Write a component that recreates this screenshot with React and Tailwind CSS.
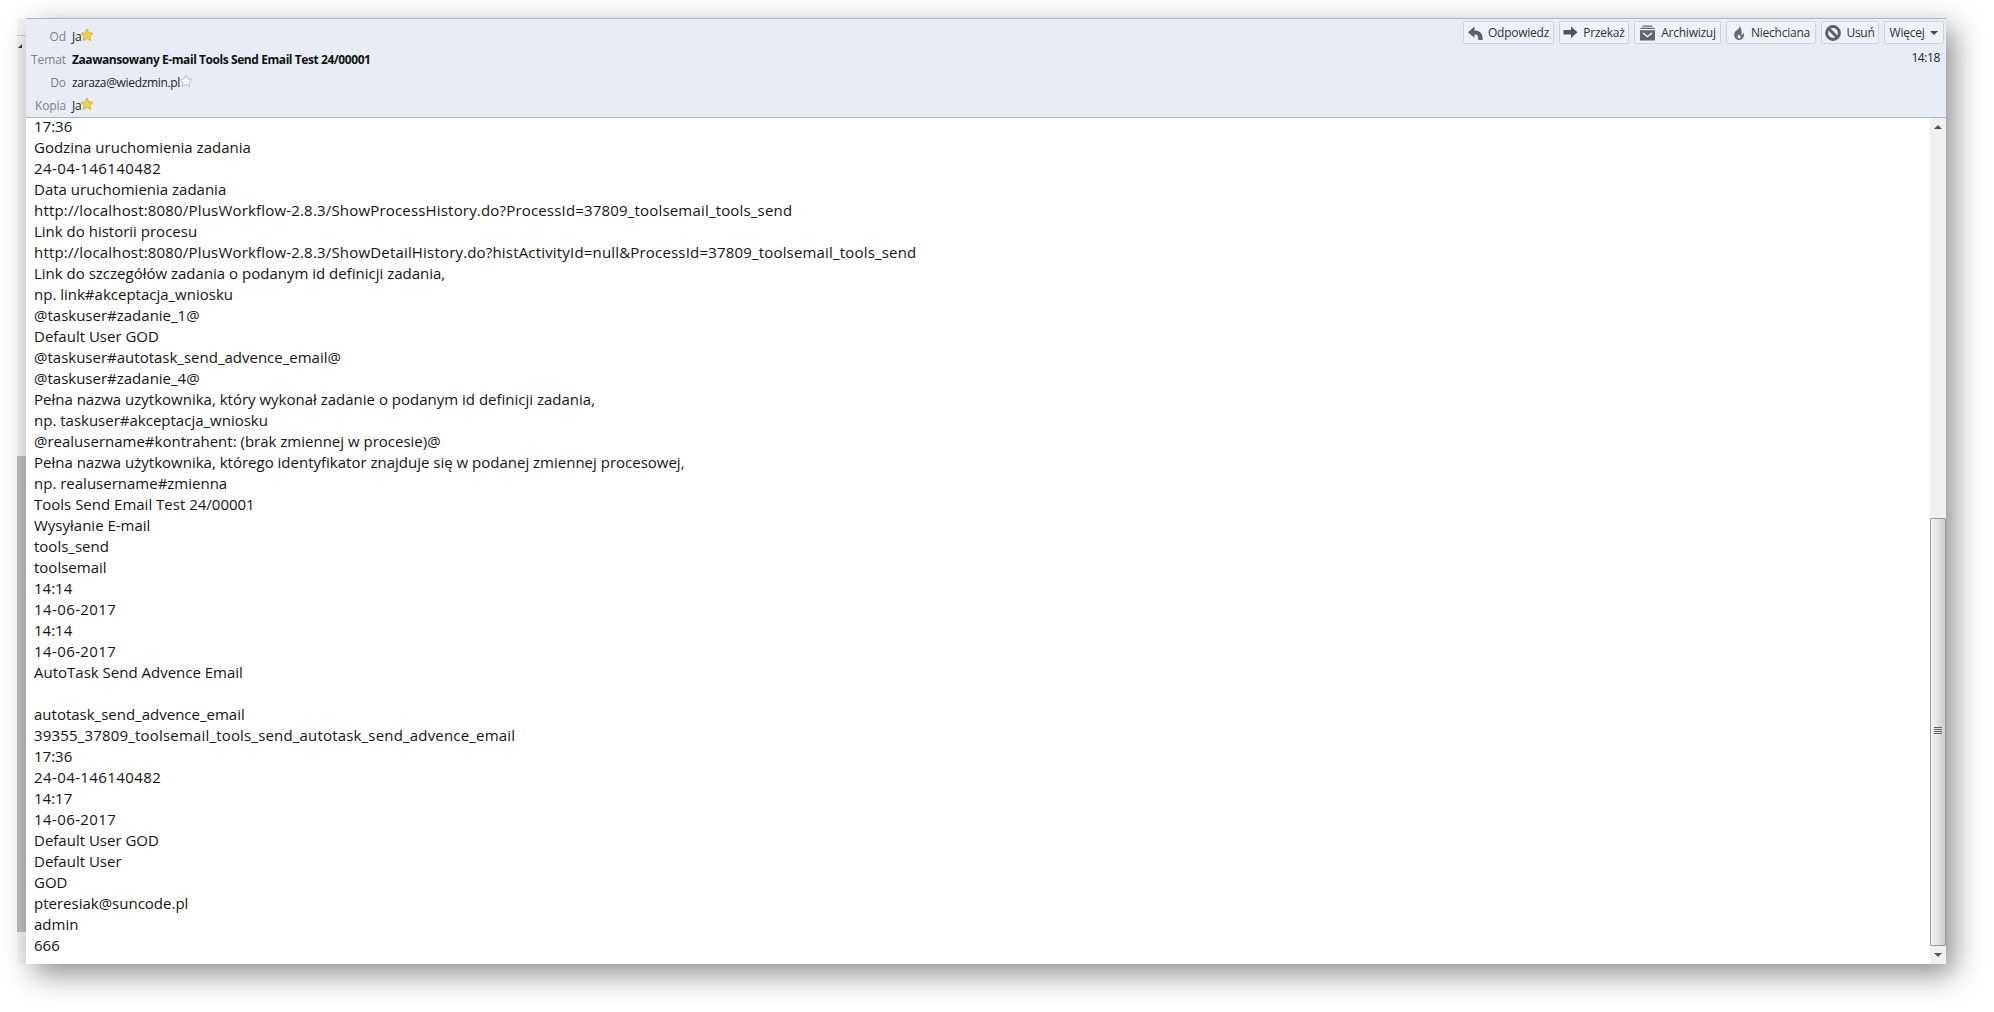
const lines = [
  ["17:36"],
  ["Godzina uruchomienia zadania"],
  ["24-04-146140482", "digits"],
  ["Data uruchomienia zadania"],
  ["http://localhost:8080/PlusWorkflow-2.8.3/ShowProcessHistory.do?ProcessId=37809_toolsemail_tools_send", "url"],
  ["Link do historii procesu"],
  ["http://localhost:8080/PlusWorkflow-2.8.3/ShowDetailHistory.do?histActivityId=null&ProcessId=37809_toolsemail_tools_send", "url"],
  ["Link do szczegółów zadania o podanym id definicji zadania,"],
  ["np. link#akceptacja_wniosku"],
  ["@taskuser#zadanie_1@"],
  ["Default User GOD"],
  ["@taskuser#autotask_send_advence_email@"],
  ["@taskuser#zadanie_4@"],
  ["Pełna nazwa uzytkownika, który wykonał zadanie o podanym id definicji zadania,"],
  ["np. taskuser#akceptacja_wniosku"],
  ["@realusername#kontrahent: (brak zmiennej w procesie)@"],
  ["Pełna nazwa użytkownika, którego identyfikator znajduje się w podanej zmiennej procesowej,"],
  ["np. realusername#zmienna"],
  ["Tools Send Email Test 24/00001"],
  ["Wysyłanie E-mail"],
  ["tools_send"],
  ["toolsemail"],
  ["14:14"],
  ["14-06-2017", "digits"],
  ["14:14"],
  ["14-06-2017", "digits"],
  ["AutoTask Send Advence Email"],
  [""],
  ["autotask_send_advence_email"],
  ["39355_37809_toolsemail_tools_send_autotask_send_advence_email", "url"],
  ["17:36"],
  ["24-04-146140482", "digits"],
  ["14:17"],
  ["14-06-2017", "digits"],
  ["Default User GOD"],
  ["Default User"],
  ["GOD"],
  ["pteresiak@suncode.pl"],
  ["admin"],
  ["666"],
];

const Star = ({ filled }) => (
  <svg width="14" height="14" viewBox="0 0 14 14" className="-ml-px -mt-1 shrink-0">
    <path
      d="M7 1l1.8 3.9 4.2.5-3.1 2.9.8 4.2L7 10.4l-3.7 2.1.8-4.2L1 5.4l4.2-.5z"
      fill={filled ? "#f6cf4f" : "#ffffff"}
      stroke={filled ? "#e3ad2c" : "#b9c0c8"}
      strokeWidth="1"
      strokeLinejoin="round"
    />
  </svg>
);

const ReplyIcon = () => (
  <svg width="15" height="16" viewBox="0 0 15 16">
    <path d="M6.5 1.5L0 7.2l6.5 5.6V9.6c2.6 0 3.9.9 3.9 5.4h4.2c.6-6.6-2.9-9.6-8.1-9.6z" fill="#56606a" />
  </svg>
);

const ForwardIcon = () => (
  <svg width="15" height="13" viewBox="0 0 15 13">
    <path d="M8 0.5L14.5 6.2 8 12V8.6H0.5V3.9H8z" fill="#4f5861" />
  </svg>
);

const ArchiveIcon = () => (
  <svg width="17" height="16" viewBox="0 0 17 16">
    <path d="M3.5 0.5h10v1.2h-10zM1.5 2.8h14v1.2h-14z" fill="#5c6670" />
    <path d="M1 5.2h15v10.3H1z" fill="#5c6670" />
    <path d="M4 8l4.5 3.6L13 8" fill="none" stroke="#eef1f5" strokeWidth="1.5" />
  </svg>
);

const JunkIcon = () => (
  <svg width="14" height="16" viewBox="0 0 14 16">
    <path d="M7.5 1C8 4 4 5 2.8 7.2 1 10.5 3.2 15 7 15s6-3.8 4.5-7.5c-.4 1.6-1.2 2.2-2 2.4C10 7 9.5 3 7.5 1z" fill="#626c76" />
    <path d="M7 9.5c-1.6 1-1.9 2.6-.9 3.6 1 .8 2.5.2 2.6-1.2 0-1-.9-1.4-1.7-2.4z" fill="#eef1f5" />
  </svg>
);

const DeleteIcon = () => (
  <svg width="16" height="16" viewBox="0 0 16 16">
    <circle cx="8" cy="8" r="6.4" fill="#eef1f5" stroke="#59636d" strokeWidth="3" />
    <path d="M3.8 3.8l8.4 8.4" stroke="#59636d" strokeWidth="3" />
  </svg>
);

const ToolButton = ({ icon, label, className }) => (
  <button
    type="button"
    className={`flex h-[23px] items-center justify-center gap-[5px] rounded-[2px] border border-[#ccd3dc] bg-[#eef1f6] text-[12px] tracking-[-0.25px] text-[#2f3438] ${className}`}
  >
    {icon}
    <span>{label}</span>
  </button>
);

const HeaderRow = ({ label, children }) => (
  <div className="flex h-[23px] items-center">
    <span className="w-[46px] pr-[6px] text-right text-[12px] tracking-[-0.1px] text-[#7d8084]">{label}</span>
    {children}
  </div>
);

const App = () => {
  return (
    <div className="h-[1012px] w-[1994px] overflow-hidden bg-white pl-[17px] pt-[18px] font-['Open_Sans','Noto_Sans',sans-serif]">
      <div className="flex h-[946px] w-[1929px]">
        <div className="flex w-[9px] shrink-0 flex-col bg-[#f6f6f6]">
          <div className="mt-[17px] h-px w-full bg-[#cccccc]" />
          <div className="ml-px mt-[8px] h-0 w-0 rotate-90 border-l-[4px] border-t-[4px] border-l-transparent border-t-[#333333]" />
          <div className="mt-[408px] h-[476px] w-full bg-[#c0c0c0]" />
        </div>

        <div className="flex h-full w-[1920px] flex-col bg-white shadow-[8px_10px_28px_rgba(0,0,0,0.45)]">
          <div className="relative flex h-[100px] shrink-0 flex-col justify-start border-y border-y-[#a9b8c9] bg-[#e8edf5] pt-[6px]">
            <HeaderRow label="Od">
              <span className="text-[12px] tracking-[-0.3px] text-[#1f2225]">Ja</span>
              <Star filled />
            </HeaderRow>
            <HeaderRow label="Temat">
              <span className="text-[12px] font-bold tracking-[-0.43px] text-[#111111]">
                Zaawansowany E-mail Tools Send Email Test 24/00001
              </span>
            </HeaderRow>
            <HeaderRow label="Do">
              <span className="text-[12px] tracking-[-0.33px] text-[#1f2225]">zaraza@wiedzmin.pl</span>
              <Star />
            </HeaderRow>
            <HeaderRow label="Kopia">
              <span className="text-[12px] tracking-[-0.3px] text-[#1f2225]">Ja</span>
              <Star filled />
            </HeaderRow>

            <div className="absolute right-[2px] top-[2px] flex flex-col items-end">
              <div className="flex gap-[5px]">
                <ToolButton icon={<ReplyIcon />} label="Odpowiedz" className="w-[91px]" />
                <ToolButton icon={<ForwardIcon />} label="Przekaż" className="w-[70px]" />
                <ToolButton icon={<ArchiveIcon />} label="Archiwizuj" className="w-[87px]" />
                <ToolButton icon={<JunkIcon />} label="Niechciana" className="w-[90px]" />
                <ToolButton icon={<DeleteIcon />} label="Usuń" className="w-[58px]" />
                <ToolButton
                  icon={null}
                  label={
                    <span className="flex items-center gap-[6px]">
                      Więcej
                      <span className="h-0 w-0 border-x-[4px] border-t-[4px] border-x-transparent border-t-[#444a50]" />
                    </span>
                  }
                  className="w-[60px]"
                />
              </div>
              <span className="mr-[4px] mt-[5px] text-[12px] tracking-[-0.4px] text-[#1f2225]">14:18</span>
            </div>
          </div>

          <div className="flex min-h-0 flex-1">
            <div className="-mt-[2px] min-w-0 flex-1 pl-[8px] text-[15px] leading-[21px] text-[#141414]">
              {lines.map(([text, kind], i) => (
                <div
                  key={i}
                  className={
                    kind === "digits"
                      ? "h-[21px] whitespace-pre tracking-[0.4px]"
                      : kind === "url"
                        ? "h-[21px] whitespace-pre tracking-[0.18px]"
                        : "h-[21px] whitespace-pre"
                  }
                >
                  {text}
                </div>
              ))}
            </div>

            <div className="flex w-[16px] shrink-0 flex-col bg-[#f0f0f0]">
              <div className="flex h-[17px] items-center justify-center">
                <span className="h-0 w-0 border-x-[4px] border-b-[4px] border-x-transparent border-b-[#555555]" />
              </div>
              <div className="flex-1" />
              <div className="relative h-[428px] rounded-[1px] border border-[#999999] bg-gradient-to-r from-[#f4f4f4] to-[#cfcfcf]">
                <div className="absolute left-[3px] top-[208px] flex w-[8px] flex-col gap-px">
                  <span className="h-px bg-[#666666]" />
                  <span className="h-px bg-[#666666]" />
                  <span className="h-px bg-[#666666]" />
                  <span className="h-px bg-[#666666]" />
                </div>
              </div>
              <div className="flex h-[18px] items-center justify-center">
                <span className="h-0 w-0 border-x-[4px] border-t-[4px] border-x-transparent border-t-[#555555]" />
              </div>
            </div>
          </div>
        </div>
      </div>
    </div>
  );
};

export default App;
